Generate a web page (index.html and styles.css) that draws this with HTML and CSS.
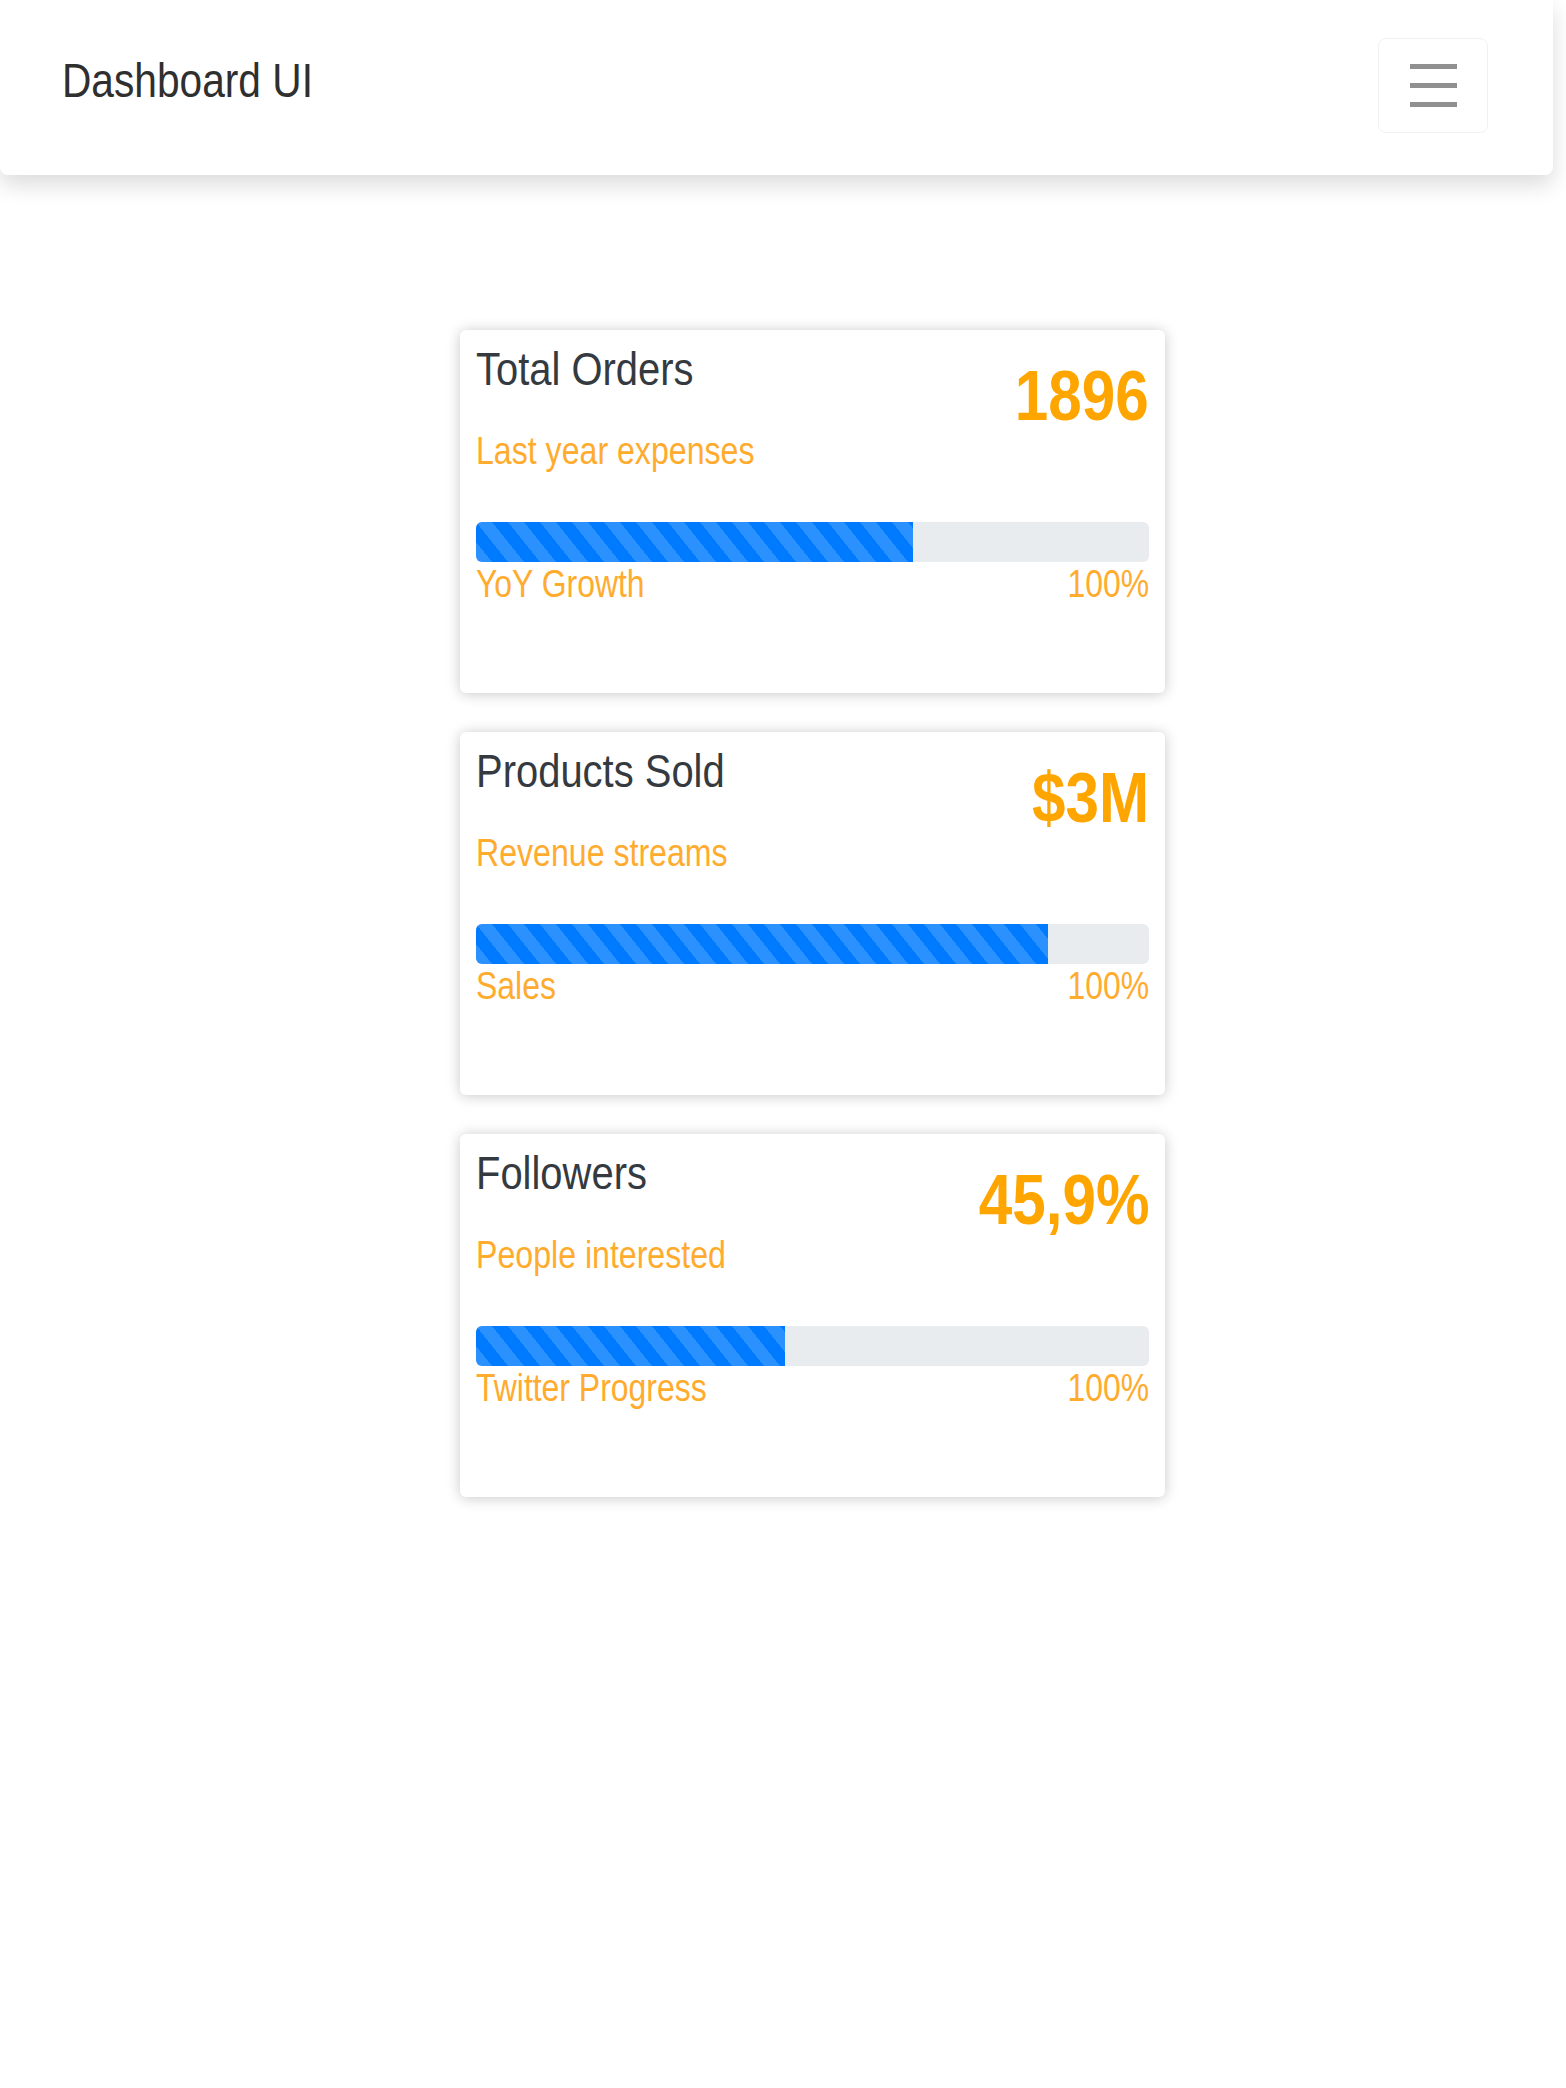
FILE: index.html
```html
<!DOCTYPE html>
<html lang="en">
<head>
<meta charset="utf-8">
<title>Dashboard UI</title>
<link rel="stylesheet" href="styles.css">
</head>
<body>
<nav class="navbar">
  <span class="brand"><span class="squeeze">Dashboard UI</span></span>
  <button class="toggler" aria-label="Toggle navigation">
    <span class="toggler-line"></span>
    <span class="toggler-line"></span>
    <span class="toggler-line"></span>
  </button>
</nav>
<main class="cards">
  <div class="card">
    <div class="card-head">
      <div class="card-text">
        <h5 class="card-title"><span class="squeeze">Total Orders</span></h5>
        <p class="card-sub"><span class="squeeze">Last year expenses</span></p>
      </div>
      <div class="card-value"><span class="squeeze squeeze-right">1896</span></div>
    </div>
    <div class="progress"><div class="progress-fill" style="width:65%"></div></div>
    <div class="progress-labels"><span class="squeeze">YoY Growth</span><span class="squeeze squeeze-right">100%</span></div>
  </div>
  <div class="card">
    <div class="card-head">
      <div class="card-text">
        <h5 class="card-title"><span class="squeeze">Products Sold</span></h5>
        <p class="card-sub"><span class="squeeze">Revenue streams</span></p>
      </div>
      <div class="card-value"><span class="squeeze squeeze-right">$3M</span></div>
    </div>
    <div class="progress"><div class="progress-fill" style="width:85%"></div></div>
    <div class="progress-labels"><span class="squeeze">Sales</span><span class="squeeze squeeze-right">100%</span></div>
  </div>
  <div class="card">
    <div class="card-head">
      <div class="card-text">
        <h5 class="card-title"><span class="squeeze">Followers</span></h5>
        <p class="card-sub"><span class="squeeze">People interested</span></p>
      </div>
      <div class="card-value"><span class="squeeze squeeze-right">45,9%</span></div>
    </div>
    <div class="progress"><div class="progress-fill" style="width:45.9%"></div></div>
    <div class="progress-labels"><span class="squeeze">Twitter Progress</span><span class="squeeze squeeze-right">100%</span></div>
  </div>
</main>
</body>
</html>
```
FILE: styles.css
```css
html, body {
  margin: 0;
  padding: 0;
  background: #ffffff;
}

body {
  font-family: "Liberation Sans", Arial, sans-serif;
  color: #343a40;
}

/* the reference typeface is a narrow grotesque: squeeze Liberation Sans horizontally */
.squeeze {
  display: inline-block;
  transform: scaleX(0.84);
  transform-origin: left center;
  white-space: nowrap;
}

.squeeze-right {
  transform-origin: right center;
}

.navbar {
  position: relative;
  z-index: 1;
  box-sizing: border-box;
  width: 1553px;
  height: 175px;
  display: flex;
  align-items: center;
  justify-content: space-between;
  padding: 0 65px 0 62px;
  background: #ffffff;
  border-radius: 0 0 8px 8px;
  box-shadow: 0 10px 22px rgba(0, 0, 0, 0.14);
}

.brand {
  font-size: 49px;
  line-height: 59px;
  color: #2f2f2f;
  margin-bottom: 14px;
}

.brand .squeeze {
  transform: scaleX(0.83);
}

.toggler {
  box-sizing: border-box;
  width: 110px;
  height: 95px;
  margin-bottom: 4px;
  padding: 0;
  display: flex;
  flex-direction: column;
  align-items: center;
  justify-content: center;
  gap: 14px;
  background: transparent;
  border: 1px solid rgba(0, 0, 0, 0.06);
  border-radius: 8px;
}

.toggler-line {
  display: block;
  width: 47px;
  height: 5px;
  background: #909090;
}

.cards {
  display: flex;
  flex-direction: column;
  gap: 39px;
  padding: 155px 0 40px 460px;
}

.card {
  box-sizing: border-box;
  width: 705px;
  padding: 11px 16px 87px;
  background: #ffffff;
  border-radius: 6px;
  box-shadow: 0 1px 14px rgba(0, 0, 0, 0.22);
}

.card-head {
  display: flex;
  justify-content: space-between;
  align-items: flex-start;
}

.card-title {
  margin: 0;
  font-size: 47px;
  line-height: 56px;
  font-weight: normal;
  color: #343a40;
}

.card-title .squeeze {
  transform: scaleX(0.85);
}

.card-sub {
  margin: 31px 0 0;
  font-size: 38px;
  line-height: 46px;
  color: #ffab2e;
}

.card-sub .squeeze {
  transform: scaleX(0.845);
}

.card-value {
  margin-top: 13px;
  font-size: 70px;
  line-height: 84px;
  font-weight: bold;
  color: #ffa500;
}

.card-value .squeeze {
  transform: scaleX(0.86);
}

.progress {
  margin-top: 48px;
  height: 40px;
  background: #e9ecef;
  border-radius: 6px;
  overflow: hidden;
}

.progress-fill {
  height: 100%;
  background-color: #007bff;
  background-image: linear-gradient(to top right,
    rgba(255, 255, 255, 0.17) 25%, transparent 25%,
    transparent 50%, rgba(255, 255, 255, 0.17) 50%,
    rgba(255, 255, 255, 0.17) 75%, transparent 75%, transparent);
  background-size: 32px 40px;
}

.progress-labels {
  display: flex;
  justify-content: space-between;
  font-size: 38px;
  line-height: 44px;
  color: #ffab2e;
}
```
